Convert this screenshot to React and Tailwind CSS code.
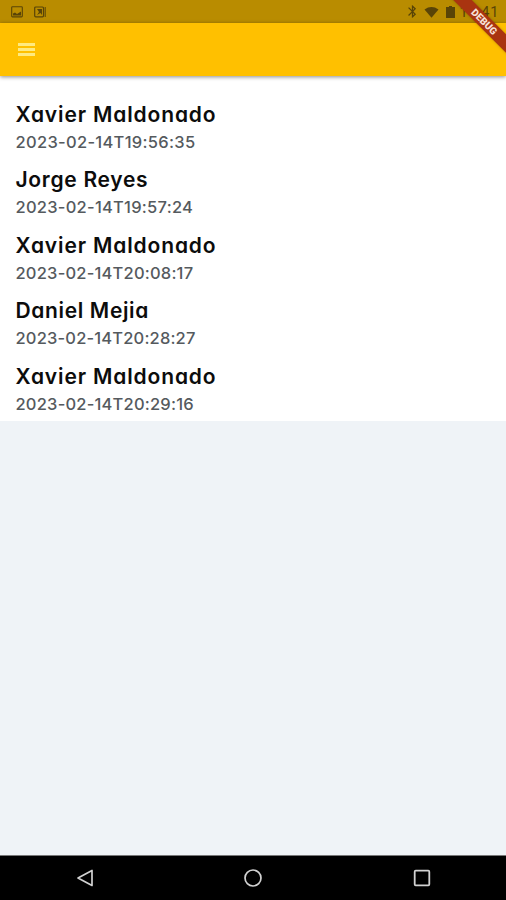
import { MdBluetooth } from 'react-icons/md';

const records = [
  { name: 'Xavier Maldonado', date: '2023-02-14T19:56:35', nameTracking: 'tracking-[0.86px]', dateTracking: 'tracking-[0.3px]' },
  { name: 'Jorge Reyes', date: '2023-02-14T19:57:24', nameTracking: 'tracking-[0.7px]', dateTracking: 'tracking-[0.25px]' },
  { name: 'Xavier Maldonado', date: '2023-02-14T20:08:17', nameTracking: 'tracking-[0.86px]', dateTracking: 'tracking-[0.2px]' },
  { name: 'Daniel Mejia', date: '2023-02-14T20:28:27', nameTracking: 'tracking-[0.65px]', dateTracking: 'tracking-[0.17px]' },
  { name: 'Xavier Maldonado', date: '2023-02-14T20:29:16', nameTracking: 'tracking-[0.86px]', dateTracking: 'tracking-[0.2px]' },
];

function StatusBar() {
  return (
    <div className="h-[23px] bg-[#b98c00] flex items-center justify-between pl-[11px] pr-[7px] text-[#594407]">
      <div className="flex items-center gap-[11px]">
        <svg className="w-3 h-3" viewBox="0 0 12 12" fill="none">
          <rect x="0.7" y="0.7" width="10.6" height="10.2" rx="0.8" stroke="currentColor" strokeWidth="1.1" />
          <path d="M2 9.5V7.5L4 6.5L6 8L10 5.5V9.5Z" fill="currentColor" />
        </svg>
        <svg className="w-3 h-3" viewBox="0 0 12 12" fill="none">
          <rect x="0.7" y="1" width="8.8" height="9.8" rx="1" stroke="currentColor" strokeWidth="1.2" />
          <path d="M3 3H8V9L6.5 7L3 9L5 6Z" fill="currentColor" />
          <path d="M11.2 1V11" stroke="currentColor" strokeWidth="1" />
        </svg>
      </div>
      <div className="flex items-center">
        <MdBluetooth className="w-[15px] h-[15px]" />
        <svg className="w-[15px] h-3 ml-[4px]" viewBox="0 0 15 12" fill="currentColor">
          <path d="M0.5 3.4Q7.5 -1.4 14.5 3.4L7.5 11.8Z" />
        </svg>
        <svg className="w-[9px] h-3 ml-[7px]" viewBox="0 0 9 12" fill="currentColor">
          <path d="M3 0H6V1H9V12H0V1H3Z" />
        </svg>
        <span className="font-[Roboto,sans-serif] text-[14.5px] leading-none ml-[4px] pt-[3px] tracking-[0.7px]">15:41</span>
      </div>
    </div>
  );
}

function AppBar() {
  return (
    <div className="relative z-10 h-[53px] bg-[#ffc000] flex items-center pl-[18px] pb-[1px] shadow-[0_1px_4px_rgba(0,0,0,0.45)]">
      <button className="flex flex-col gap-[2px]">
        <span className="w-[17px] h-[3px] bg-[#ffea80]" />
        <span className="w-[17px] h-[3px] bg-[#ffea80]" />
        <span className="w-[17px] h-[3px] bg-[#ffea80]" />
      </button>
    </div>
  );
}

function DebugBanner() {
  return (
    <div className="absolute top-0 right-0 z-20 w-[60px] h-[60px] overflow-hidden">
      <div className="absolute left-[-12px] top-[15px] w-[100px] h-[13px] rotate-45 bg-[#a93410] shadow-[0_0_3px_rgba(0,0,0,0.25)] flex items-center justify-center">
        <span className="font-[Roboto,sans-serif] text-[10px] leading-none font-black text-[#f6dfd5] pl-[1px]">DEBUG</span>
      </div>
    </div>
  );
}

function RecordItem({ record }) {
  return (
    <div className="h-[65.6px] pl-[15.5px] whitespace-nowrap">
      <p className={`text-[21px] leading-[29px] font-semibold text-[#0c0c0c] ${record.nameTracking}`}>{record.name}</p>
      <p className={`text-[16.5px] leading-[27px] font-medium text-[#555a5e] ${record.dateTracking}`}>{record.date}</p>
    </div>
  );
}

function NavigationBar() {
  return (
    <div className="h-[45px] bg-black border-t border-[#777] grid grid-cols-3 items-center justify-items-center text-[#d2d2d2]">
      <svg className="w-[18px] h-[18px] ml-[2px]" viewBox="0 0 18 18" fill="none" stroke="currentColor" strokeWidth="1.7" strokeLinejoin="round">
        <path d="M2 9L16 1.5V16.5Z" />
      </svg>
      <svg className="w-[18px] h-[18px]" viewBox="0 0 18 18" fill="none" stroke="currentColor" strokeWidth="1.7">
        <circle cx="9" cy="9" r="8" />
      </svg>
      <svg className="w-[18px] h-[18px]" viewBox="0 0 18 18" fill="none" stroke="currentColor" strokeWidth="1.8">
        <rect x="1.7" y="1.7" width="14.6" height="14.6" rx="1" />
      </svg>
    </div>
  );
}

export default function App() {
  return (
    <div className="relative w-[506px] h-[900px] flex flex-col overflow-hidden bg-[#eff3f7] font-[Inter,sans-serif] [font-feature-settings:'cv11']">
      <StatusBar />
      <AppBar />
      <div className="h-[345px] shrink-0 bg-white pt-[23.5px]">
        {records.map((record) => (
          <RecordItem key={record.date} record={record} />
        ))}
      </div>
      <div className="flex-1" />
      <NavigationBar />
      <DebugBanner />
    </div>
  );
}
